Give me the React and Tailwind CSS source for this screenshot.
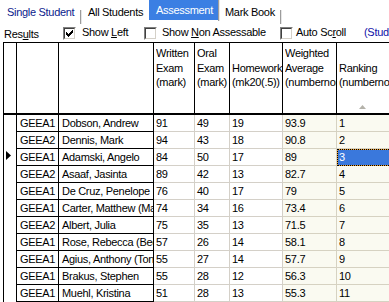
import React from 'react'

const students = [
  ['GEEA1', 'Dobson, Andrew', '91', '49', '19', '93.9', '1'],
  ['GEEA2', 'Dennis, Mark', '94', '43', '18', '90.8', '2'],
  ['GEEA1', 'Adamski, Angelo', '84', '50', '17', '89', '3'],
  ['GEEA2', 'Asaaf, Jasinta', '89', '42', '13', '82.7', '4'],
  ['GEEA1', 'De Cruz, Penelope', '76', '40', '17', '79', '5'],
  ['GEEA1', 'Carter, Matthew (Matt)', '74', '34', '16', '73.4', '6'],
  ['GEEA2', 'Albert, Julia', '75', '35', '13', '71.5', '7'],
  ['GEEA1', 'Rose, Rebecca (Becky)', '57', '26', '14', '58.1', '8'],
  ['GEEA1', 'Agius, Anthony (Tony)', '55', '27', '14', '57.7', '9'],
  ['GEEA1', 'Brakus, Stephen', '55', '28', '12', '56.3', '10'],
  ['GEEA1', 'Muehl, Kristina', '51', '28', '13', '55.3', '11'],
]

const current = 2

// classic 7x7 windows tick, one 3px bar per column
const tick = [2, 3, 4, 3, 2, 1, 0]

function CheckBox({ checked }) {
  return (
    <span className="mt-[3px] flex h-[13px] w-[13px] shrink-0 border border-t-[#808080] border-l-[#808080] border-b-white border-r-white">
      <span className="flex h-full w-full items-center justify-center border border-t-[#404040] border-l-[#404040] border-b-[#d4d0c8] border-r-[#d4d0c8] bg-white">
        {checked && (
          <svg width="7" height="7" viewBox="0 0 7 7" shapeRendering="crispEdges">
            {tick.map((top, col) => (
              <rect key={col} x={col} y={top} width="1" height="3" fill="#000" />
            ))}
          </svg>
        )}
      </span>
    </span>
  )
}

function Separator({ full }) {
  return (
    <span
      className={
        full
          ? 'ml-auto h-full w-[2px] border-l border-r border-l-[#9c9c9c] border-r-[#e6e6e6]'
          : 'ml-auto mt-[6px] h-[14px] w-[2px] border-l border-r border-l-[#9c9c9c] border-r-[#e6e6e6]'
      }
    />
  )
}

function HeadCell({ className, lines = [], sort }) {
  return (
    <div className={`flex h-full shrink-0 flex-col border-r border-black ${className}`}>
      <div className="flex h-[46.5px] flex-col justify-end pl-[2px] pt-[3px] leading-[14.5px]">
        {lines.map((line) => (
          <div key={line} className="overflow-hidden whitespace-nowrap">
            {line}
          </div>
        ))}
      </div>
      {sort && (
        <svg className="mb-[4px] ml-[22px] mt-auto" width="7" height="4" viewBox="0 0 7 4">
          <polygon points="3.5,0 7,4 0,4" fill="#b4b2aa" />
        </svg>
      )}
    </div>
  )
}

export default function App() {
  return (
    <div className="h-[302px] w-[389px] overflow-hidden bg-white font-['Liberation_Sans',Arial,sans-serif] text-[11px] tracking-[-0.3px] text-black">
      <div className="flex h-[21px]">
        <div className="flex w-[82px] shrink-0 pl-[7px] pt-[4px] leading-[17px] text-[#0a1a8c]">
          <span className="whitespace-nowrap">Single Student</span>
          <Separator />
        </div>
        <div className="flex w-[67px] shrink-0 pl-[6px] pt-[4px] leading-[17px]">
          <span className="whitespace-nowrap">All Students</span>
        </div>
        <div className="flex w-[71px] shrink-0">
          <div className="h-[20px] w-[69px] bg-[#3b7fe3] pl-[7px] pt-[2px] leading-[17px] text-white">
            <span className="whitespace-nowrap">Assessment</span>
          </div>
          <Separator full />
        </div>
        <div className="flex w-[62px] shrink-0 pl-[5px] pt-[4px] leading-[17px]">
          <span className="whitespace-nowrap">Mark Book</span>
          <Separator />
        </div>
      </div>

      <div className="flex h-[21px] whitespace-nowrap leading-[16px]">
        <div className="w-[63px] shrink-0 pl-[4px] pt-[5px]">
          Res<u>u</u>lts
        </div>
        <label className="flex w-[81px] shrink-0 pt-[3px]">
          <CheckBox checked />
          <span className="ml-[6px]">
            Show <u>L</u>eft
          </span>
        </label>
        <label className="flex w-[136px] shrink-0 pt-[3px]">
          <CheckBox />
          <span className="ml-[5px]">
            Show <u>N</u>on Assessable
          </span>
        </label>
        <label className="flex w-[84px] shrink-0 pt-[3px]">
          <CheckBox />
          <span className="ml-[3px]">
            Auto Sc<u>r</u>oll
          </span>
        </label>
        <div className="pt-[3px] text-[#1010a8]">(Student view)</div>
      </div>

      <div className="ml-[3px] w-max border-l border-t border-black">
        <div className="flex h-[72px] border-b-2 border-black">
          <HeadCell className="w-[13px]" />
          <HeadCell className="w-[42px]" />
          <HeadCell className="w-[95px]" />
          <HeadCell className="w-[41px]" lines={['Written', 'Exam', '(mark)']} />
          <HeadCell className="w-[35px]" lines={['Oral', 'Exam', '(mark)']} />
          <HeadCell className="w-[53px]" lines={['Homework', '(mk20(.5))']} />
          <HeadCell className="w-[54px]" lines={['Weighted', 'Average', '(numbernoround)']} />
          <HeadCell className="w-[60px]" lines={['Ranking', '(numbernoround)']} sort />
        </div>

        {students.map(([group, name, written, oral, homework, average, rank], i) => (
          <div key={name} className="flex h-[17px] leading-[16px]">
            <div className="flex w-[13px] shrink-0 border-r border-black pl-[2px] pt-[2px]">
              {i === current && (
                <svg width="5" height="9" viewBox="0 0 5 9">
                  <polygon points="0,0 5,4.5 0,9" fill="#000" />
                </svg>
              )}
            </div>
            <div className="w-[42px] shrink-0 overflow-hidden whitespace-nowrap border-b border-r border-black pl-[3px]">
              {group}
            </div>
            <div className="w-[95px] shrink-0 overflow-hidden whitespace-nowrap border-b border-r border-black pl-[3px]">
              {name}
            </div>
            <div className="w-[41px] shrink-0 border-b border-r border-[#d4d0c8] pl-[2px]">{written}</div>
            <div className="w-[35px] shrink-0 border-b border-r border-[#d4d0c8] pl-[2px]">{oral}</div>
            <div className="w-[53px] shrink-0 border-b border-r border-[#d4d0c8] pl-[2px]">{homework}</div>
            <div className="w-[54px] shrink-0 border-b border-r border-[#d6d2c2] bg-[#fafaf1] pl-[2px]">{average}</div>
            {i === current ? (
              <div className="w-[60px] shrink-0 bg-[#3a78dc] pl-[2px] text-white shadow-[inset_0_0_0_1px_#f0a030] outline-1 outline-dotted outline-black -outline-offset-1">
                {rank}
              </div>
            ) : (
              <div className="w-[60px] shrink-0 border-b border-[#d6d2c2] bg-[#fafaf1] pl-[2px]">{rank}</div>
            )}
          </div>
        ))}
      </div>
    </div>
  )
}
